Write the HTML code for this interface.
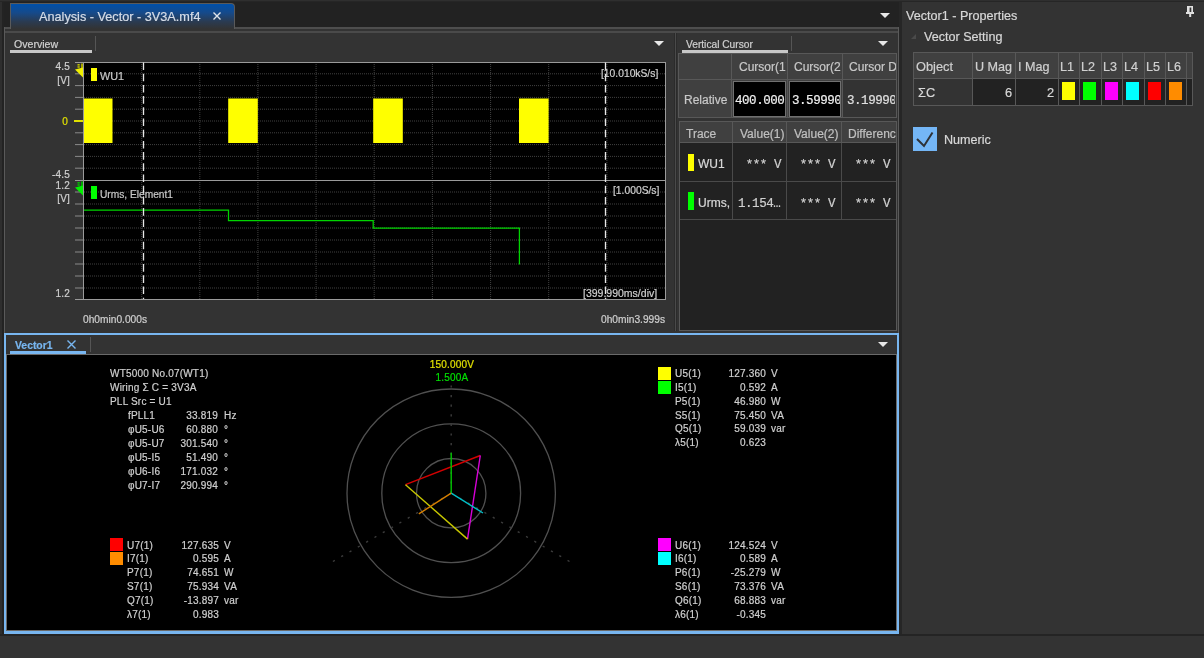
<!DOCTYPE html><html><head><meta charset="utf-8"><style>
html,body{margin:0;padding:0;width:1204px;height:658px;overflow:hidden;background:#333;font-family:"Liberation Sans",sans-serif;position:relative}
.t{position:absolute;height:0;white-space:pre;line-height:0;}
.t span{position:absolute;left:0;bottom:0;line-height:1;display:block;transform:translateY(0.1535em);-webkit-text-stroke:0.2px currentColor;}
.t.m span{transform:translateY(0.2335em);letter-spacing:-0.45px}
.t.r span{left:auto;right:0;}
.t.c span{left:auto;right:auto;transform:translate(-50%,0.1535em);}
.clip{position:absolute;overflow:hidden;}
body>div{will-change:transform}
svg{position:absolute;left:0;top:0;}
</style></head><body>
<div style="position:absolute;left:0px;top:0px;width:1204px;height:658px;background:#333"></div>
<div style="position:absolute;left:0px;top:0px;width:1204px;height:1px;background:#2f2f2f"></div>
<div style="position:absolute;left:0px;top:1px;width:1204px;height:1px;background:#262626"></div>
<div style="position:absolute;left:0px;top:2px;width:900px;height:27px;background:#222"></div>
<div style="position:absolute;left:0px;top:2px;width:2px;height:632px;background:#2e2e2e"></div>
<div style="position:absolute;left:2px;top:2px;width:2px;height:632px;background:#232323"></div>
<div style="position:absolute;left:899px;top:2px;width:3px;height:632px;background:#262626"></div>
<div style="position:absolute;left:902px;top:2px;width:302px;height:632px;background:#333"></div>
<div style="position:absolute;left:0px;top:634px;width:1204px;height:2px;background:#242424"></div>
<div style="position:absolute;left:899px;top:634px;width:2px;height:2px;background:#242424"></div>
<div style="position:absolute;left:4px;top:27px;width:895px;height:2px;background:#4e4e4e"></div>
<div style="position:absolute;left:4px;top:27px;width:1px;height:306px;background:#5a5a5a"></div>
<div style="position:absolute;left:898px;top:27px;width:1px;height:306px;background:#5a5a5a"></div>
<div style="position:absolute;left:5px;top:29px;width:893px;height:2px;background:#333"></div>
<div style="position:absolute;left:5px;top:31px;width:893px;height:2px;background:#4a4a4a"></div>
<div style="position:absolute;left:5px;top:33px;width:893px;height:300px;background:#333"></div>
<div style="position:absolute;left:10px;top:3px;width:223px;height:25px;border:1px solid #5a5a5a;border-bottom:none;border-radius:0 4px 0 0;background:linear-gradient(#0050aa,#164a8a 35%,#2a3b52 70%,#333 100%);"></div>
<div style="position:absolute;left:674px;top:33px;width:3px;height:298px;background:#2b2b2b"></div>
<div style="position:absolute;left:675px;top:33px;width:1px;height:298px;background:#4a4a4a"></div>
<div style="position:absolute;left:10px;top:50px;width:82px;height:3px;background:#c8c8c8"></div>
<div style="position:absolute;left:95px;top:36px;width:1px;height:15px;background:#555"></div>
<div style="position:absolute;left:83px;top:62px;width:582px;height:238px;background:#000"></div>
<div style="position:absolute;left:682px;top:50px;width:106px;height:3px;background:#c8c8c8"></div>
<div style="position:absolute;left:791px;top:36px;width:1px;height:15px;background:#555"></div>
<div style="position:absolute;left:678px;top:53px;width:219px;height:65px;background:#404040;border:1px solid #585858;box-sizing:border-box"></div>
<div style="position:absolute;left:731px;top:53px;width:1px;height:65px;background:#585858"></div>
<div style="position:absolute;left:787px;top:53px;width:1px;height:65px;background:#585858"></div>
<div style="position:absolute;left:842px;top:53px;width:1px;height:65px;background:#585858"></div>
<div style="position:absolute;left:678px;top:79px;width:219px;height:1px;background:#585858"></div>
<div style="position:absolute;left:733px;top:81px;width:53px;height:36px;background:#000;border:1px solid #707070;box-sizing:border-box"></div>
<div style="position:absolute;left:789px;top:81px;width:52px;height:36px;background:#000;border:1px solid #707070;box-sizing:border-box"></div>
<div style="position:absolute;left:843px;top:80px;width:53px;height:37px;background:#333"></div>
<div style="position:absolute;left:679px;top:121px;width:218px;height:210px;background:#222;border:1px solid #585858;box-sizing:border-box"></div>
<div style="position:absolute;left:680px;top:122px;width:216px;height:20px;background:#404040"></div>
<div style="position:absolute;left:680px;top:142px;width:216px;height:1px;background:#585858"></div>
<div style="position:absolute;left:680px;top:181px;width:216px;height:1px;background:#4a4a4a"></div>
<div style="position:absolute;left:680px;top:219px;width:216px;height:1px;background:#4a4a4a"></div>
<div style="position:absolute;left:732px;top:122px;width:1px;height:20px;background:#585858"></div>
<div style="position:absolute;left:732px;top:143px;width:1px;height:76px;background:#4a4a4a"></div>
<div style="position:absolute;left:786px;top:122px;width:1px;height:20px;background:#585858"></div>
<div style="position:absolute;left:786px;top:143px;width:1px;height:76px;background:#4a4a4a"></div>
<div style="position:absolute;left:841px;top:122px;width:1px;height:20px;background:#585858"></div>
<div style="position:absolute;left:841px;top:143px;width:1px;height:76px;background:#4a4a4a"></div>
<div style="position:absolute;left:688px;top:154px;width:6px;height:17px;background:#ffff00"></div>
<div style="position:absolute;left:688px;top:192px;width:6px;height:18px;background:#00ff00"></div>
<div style="position:absolute;left:4px;top:333px;width:895px;height:2px;background:#78b6f0"></div>
<div style="position:absolute;left:4px;top:333px;width:2px;height:300px;background:#78b6f0"></div>
<div style="position:absolute;left:897px;top:333px;width:2px;height:300px;background:#78b6f0"></div>
<div style="position:absolute;left:4px;top:631px;width:895px;height:3px;background:#78b6f0"></div>
<div style="position:absolute;left:6px;top:335px;width:891px;height:20px;background:#333"></div>
<div style="position:absolute;left:6px;top:354px;width:891px;height:1px;background:#6a6a6a"></div>
<div style="position:absolute;left:6px;top:354px;width:1px;height:277px;background:#6a6a6a"></div>
<div style="position:absolute;left:896px;top:354px;width:1px;height:277px;background:#6a6a6a"></div>
<div style="position:absolute;left:6px;top:630px;width:891px;height:1px;background:#6a6a6a"></div>
<div style="position:absolute;left:7px;top:355px;width:889px;height:275px;background:#000"></div>
<div style="position:absolute;left:10px;top:351px;width:76px;height:3px;background:#78b6f0"></div>
<div style="position:absolute;left:90px;top:337px;width:1px;height:15px;background:#555"></div>
<div style="position:absolute;left:110.2px;top:538.0px;width:12.5px;height:12.5px;background:#ff0000"></div>
<div style="position:absolute;left:110.2px;top:552.0px;width:12.5px;height:12.5px;background:#ff8c00"></div>
<div style="position:absolute;left:657.6px;top:366.5px;width:12.5px;height:12.5px;background:#ffff00"></div>
<div style="position:absolute;left:657.6px;top:380.5px;width:12.5px;height:12.5px;background:#00ff00"></div>
<div style="position:absolute;left:657.6px;top:538.0px;width:12.5px;height:12.5px;background:#ff00ff"></div>
<div style="position:absolute;left:657.6px;top:552.0px;width:12.5px;height:12.5px;background:#00ffff"></div>
<div style="position:absolute;left:913px;top:52px;width:280px;height:54px;background:#222;border:1px solid #585858;box-sizing:border-box"></div>
<div style="position:absolute;left:914px;top:53px;width:278px;height:25px;background:#404040"></div>
<div style="position:absolute;left:914px;top:53px;width:58px;height:52px;background:#404040"></div>
<div style="position:absolute;left:914px;top:79px;width:58px;height:26px;background:#333"></div>
<div style="position:absolute;left:914px;top:78px;width:278px;height:1px;background:#585858"></div>
<div style="position:absolute;left:972px;top:53px;width:1px;height:52px;background:#585858"></div>
<div style="position:absolute;left:1015px;top:53px;width:1px;height:52px;background:#585858"></div>
<div style="position:absolute;left:1058px;top:53px;width:1px;height:52px;background:#585858"></div>
<div style="position:absolute;left:1079px;top:53px;width:1px;height:52px;background:#585858"></div>
<div style="position:absolute;left:1101px;top:53px;width:1px;height:52px;background:#585858"></div>
<div style="position:absolute;left:1122px;top:53px;width:1px;height:52px;background:#585858"></div>
<div style="position:absolute;left:1144px;top:53px;width:1px;height:52px;background:#585858"></div>
<div style="position:absolute;left:1165px;top:53px;width:1px;height:52px;background:#585858"></div>
<div style="position:absolute;left:1186px;top:53px;width:1px;height:52px;background:#585858"></div>
<div style="position:absolute;left:1061.5px;top:82px;width:13px;height:18.3px;background:#ffff00"></div>
<div style="position:absolute;left:1082.5px;top:82px;width:13px;height:18.3px;background:#00ff00"></div>
<div style="position:absolute;left:1104.5px;top:82px;width:13px;height:18.3px;background:#ff00ff"></div>
<div style="position:absolute;left:1125.5px;top:82px;width:13px;height:18.3px;background:#00ffff"></div>
<div style="position:absolute;left:1147.5px;top:82px;width:13px;height:18.3px;background:#ff0000"></div>
<div style="position:absolute;left:1168.5px;top:82px;width:13px;height:18.3px;background:#ff8c00"></div>
<div style="position:absolute;left:913px;top:127px;width:24px;height:24px;background:#74b6f6"></div>
<svg width="1204" height="658" style="position:absolute;left:0;top:0;pointer-events:none"><path d="M880 13 L890 13 L885 18 Z" fill="#e8e8e8"/><path d="M213.5 12.5 L220.5 19.5 M220.5 12.5 L213.5 19.5" stroke="#dfe4ea" stroke-width="1.4"/><path d="M654 41 L664 41 L659 46 Z" fill="#e8e8e8"/><path d="M878 41 L888 41 L883 46 Z" fill="#e8e8e8"/><line x1="141.7" y1="62" x2="141.7" y2="300" stroke="#404040" stroke-width="1" stroke-dasharray="1 1"/><line x1="199.8" y1="62" x2="199.8" y2="300" stroke="#404040" stroke-width="1" stroke-dasharray="1 1"/><line x1="257.9" y1="62" x2="257.9" y2="300" stroke="#404040" stroke-width="1" stroke-dasharray="1 1"/><line x1="316.1" y1="62" x2="316.1" y2="300" stroke="#404040" stroke-width="1" stroke-dasharray="1 1"/><line x1="374.2" y1="62" x2="374.2" y2="300" stroke="#404040" stroke-width="1" stroke-dasharray="1 1"/><line x1="432.4" y1="62" x2="432.4" y2="300" stroke="#404040" stroke-width="1" stroke-dasharray="1 1"/><line x1="490.6" y1="62" x2="490.6" y2="300" stroke="#404040" stroke-width="1" stroke-dasharray="1 1"/><line x1="548.7" y1="62" x2="548.7" y2="300" stroke="#404040" stroke-width="1" stroke-dasharray="1 1"/><line x1="606.9" y1="62" x2="606.9" y2="300" stroke="#404040" stroke-width="1" stroke-dasharray="1 1"/><line x1="84" y1="73.8" x2="665" y2="73.8" stroke="#404040" stroke-width="1" stroke-dasharray="1 1"/><line x1="75" y1="73.8" x2="83" y2="73.8" stroke="#8a8a8a" stroke-width="1"/><line x1="84" y1="85.6" x2="665" y2="85.6" stroke="#404040" stroke-width="1" stroke-dasharray="1 1"/><line x1="75" y1="85.6" x2="83" y2="85.6" stroke="#8a8a8a" stroke-width="1"/><line x1="84" y1="97.4" x2="665" y2="97.4" stroke="#404040" stroke-width="1" stroke-dasharray="1 1"/><line x1="75" y1="97.4" x2="83" y2="97.4" stroke="#8a8a8a" stroke-width="1"/><line x1="84" y1="109.2" x2="665" y2="109.2" stroke="#404040" stroke-width="1" stroke-dasharray="1 1"/><line x1="75" y1="109.2" x2="83" y2="109.2" stroke="#8a8a8a" stroke-width="1"/><line x1="84" y1="121.0" x2="665" y2="121.0" stroke="#404040" stroke-width="1" stroke-dasharray="1 1"/><line x1="75" y1="121.0" x2="83" y2="121.0" stroke="#8a8a8a" stroke-width="1"/><line x1="84" y1="132.8" x2="665" y2="132.8" stroke="#404040" stroke-width="1" stroke-dasharray="1 1"/><line x1="75" y1="132.8" x2="83" y2="132.8" stroke="#8a8a8a" stroke-width="1"/><line x1="84" y1="144.6" x2="665" y2="144.6" stroke="#404040" stroke-width="1" stroke-dasharray="1 1"/><line x1="75" y1="144.6" x2="83" y2="144.6" stroke="#8a8a8a" stroke-width="1"/><line x1="84" y1="156.4" x2="665" y2="156.4" stroke="#404040" stroke-width="1" stroke-dasharray="1 1"/><line x1="75" y1="156.4" x2="83" y2="156.4" stroke="#8a8a8a" stroke-width="1"/><line x1="84" y1="168.2" x2="665" y2="168.2" stroke="#404040" stroke-width="1" stroke-dasharray="1 1"/><line x1="75" y1="168.2" x2="83" y2="168.2" stroke="#8a8a8a" stroke-width="1"/><line x1="84" y1="192.0" x2="665" y2="192.0" stroke="#404040" stroke-width="1" stroke-dasharray="1 1"/><line x1="75" y1="192.0" x2="83" y2="192.0" stroke="#8a8a8a" stroke-width="1"/><line x1="84" y1="204.0" x2="665" y2="204.0" stroke="#404040" stroke-width="1" stroke-dasharray="1 1"/><line x1="75" y1="204.0" x2="83" y2="204.0" stroke="#8a8a8a" stroke-width="1"/><line x1="84" y1="216.0" x2="665" y2="216.0" stroke="#404040" stroke-width="1" stroke-dasharray="1 1"/><line x1="75" y1="216.0" x2="83" y2="216.0" stroke="#8a8a8a" stroke-width="1"/><line x1="84" y1="228.0" x2="665" y2="228.0" stroke="#404040" stroke-width="1" stroke-dasharray="1 1"/><line x1="75" y1="228.0" x2="83" y2="228.0" stroke="#8a8a8a" stroke-width="1"/><line x1="84" y1="240.0" x2="665" y2="240.0" stroke="#404040" stroke-width="1" stroke-dasharray="1 1"/><line x1="75" y1="240.0" x2="83" y2="240.0" stroke="#8a8a8a" stroke-width="1"/><line x1="84" y1="252.0" x2="665" y2="252.0" stroke="#404040" stroke-width="1" stroke-dasharray="1 1"/><line x1="75" y1="252.0" x2="83" y2="252.0" stroke="#8a8a8a" stroke-width="1"/><line x1="84" y1="264.0" x2="665" y2="264.0" stroke="#404040" stroke-width="1" stroke-dasharray="1 1"/><line x1="75" y1="264.0" x2="83" y2="264.0" stroke="#8a8a8a" stroke-width="1"/><line x1="84" y1="276.0" x2="665" y2="276.0" stroke="#404040" stroke-width="1" stroke-dasharray="1 1"/><line x1="75" y1="276.0" x2="83" y2="276.0" stroke="#8a8a8a" stroke-width="1"/><line x1="84" y1="288.0" x2="665" y2="288.0" stroke="#404040" stroke-width="1" stroke-dasharray="1 1"/><line x1="75" y1="288.0" x2="83" y2="288.0" stroke="#8a8a8a" stroke-width="1"/><line x1="75" y1="62.5" x2="666" y2="62.5" stroke="#9a9a9a"/><line x1="75" y1="180.5" x2="666" y2="180.5" stroke="#9a9a9a"/><line x1="75" y1="299.5" x2="666" y2="299.5" stroke="#9a9a9a"/><line x1="83.5" y1="62" x2="83.5" y2="300" stroke="#9a9a9a"/><line x1="665.5" y1="62" x2="665.5" y2="300" stroke="#9a9a9a"/><rect x="84" y="98.5" width="28.5" height="44.5" fill="#ffff00"/><rect x="228.2" y="98.5" width="29.6" height="44.5" fill="#ffff00"/><rect x="373.2" y="98.5" width="29.6" height="44.5" fill="#ffff00"/><rect x="519" y="98.5" width="29.6" height="44.5" fill="#ffff00"/><line x1="74" y1="121" x2="83" y2="121" stroke="#e0e000" stroke-width="2"/><path d="M84 210 H228.5 V220.5 H373.2 V228 H519.4 V264.5" fill="none" stroke="#00d400" stroke-width="1.25"/><line x1="143.5" y1="62.5" x2="143.5" y2="299" stroke="#e8e8e8" stroke-width="1.3" stroke-dasharray="7.6 3.6"/><line x1="605.5" y1="62.5" x2="605.5" y2="299" stroke="#e8e8e8" stroke-width="1.3" stroke-dasharray="7.6 3.6"/><rect x="81" y="63.5" width="2" height="7" fill="#a8a800"/><path d="M75 69.5 L83 67.5 L83 77.5 Z" fill="#f0f000"/><rect x="77.5" y="64" width="2.2" height="1.6" fill="#c0c000"/><rect x="77.5" y="66.2" width="2.2" height="1.6" fill="#c0c000"/><rect x="81" y="181.5" width="2" height="7" fill="#00a800"/><path d="M75 187.5 L83 185.5 L83 195.5 Z" fill="#00f000"/><rect x="77.5" y="182" width="2.2" height="1.6" fill="#00c000"/><rect x="77.5" y="184.2" width="2.2" height="1.6" fill="#00c000"/><path d="M67.5 340.5 L75.5 348.5 M75.5 340.5 L67.5 348.5" stroke="#78b6f0" stroke-width="1.4"/><path d="M878 342 L888 342 L883 347 Z" fill="#e8e8e8"/><circle cx="451.2" cy="493.2" r="34.7" fill="none" stroke="#505050" stroke-width="1.3"/><circle cx="451.2" cy="493.2" r="69.4" fill="none" stroke="#505050" stroke-width="1.3"/><circle cx="451.2" cy="493.2" r="104.2" fill="none" stroke="#505050" stroke-width="1.3"/><line x1="451.2" y1="493.2" x2="451.2" y2="385.2" stroke="#3c3c3c" stroke-width="1.4" stroke-dasharray="2.2 7.4"/><line x1="451.2" y1="493.2" x2="331.7" y2="562.2" stroke="#3c3c3c" stroke-width="1.4" stroke-dasharray="2.2 7.4"/><line x1="451.2" y1="493.2" x2="570.7" y2="562.2" stroke="#3c3c3c" stroke-width="1.4" stroke-dasharray="2.2 7.4"/><path d="M405.5 484.7 L480.3 455.5" stroke="#d40000" stroke-width="1.4" fill="none"/><path d="M480.3 455.5 L467.5 539.1" stroke="#d800d8" stroke-width="1.4" fill="none"/><path d="M467.5 539.1 L405.5 484.7" stroke="#c8c800" stroke-width="1.4" fill="none"/><path d="M451.2 493.2 L451.2 452.8" stroke="#00c800" stroke-width="1.4" fill="none"/><path d="M451.2 493.2 L483 513" stroke="#00c0c8" stroke-width="1.4" fill="none"/><path d="M451.2 493.2 L418.8 513.9" stroke="#d88000" stroke-width="1.4" fill="none"/><g fill="#e0e0e0"><rect x="1187" y="6" width="6" height="1.5"/><rect x="1187" y="6" width="2.6" height="7"/><rect x="1191.3" y="6" width="1.7" height="7"/><rect x="1186" y="12" width="8" height="2"/><rect x="1189.2" y="13" width="2" height="4"/></g><path d="M916 34 L916 39 L911 39 Z" fill="#4a4a4a"/><path d="M917 139 L924 146 L932.5 132.5" stroke="#2e3238" stroke-width="2" fill="none"/></svg>
<div class="t" style="left:39px;top:22px;font-size:12.7px;color:#d6dde8;"><span>Analysis - Vector - 3V3A.mf4</span></div>
<div class="t" style="left:14px;top:48px;font-size:10.6px;color:#d0d0d0;"><span>Overview</span></div>
<div style="position:absolute;left:91.3px;top:68px;width:5.6px;height:12.8px;background:#ffff00"></div>
<div class="t" style="left:100px;top:80px;font-size:10.8px;color:#c8c8c8;"><span>WU1</span></div>
<div style="position:absolute;left:91.3px;top:186px;width:5.6px;height:12.6px;background:#00ff00"></div>
<div class="t" style="left:100px;top:198px;font-size:10.2px;color:#c8c8c8;"><span>Urms, Element1</span></div>
<div class="t" style="left:601px;top:77px;font-size:10.3px;color:#d0d0d0;"><span>[10.010kS/s]</span></div>
<div class="t" style="left:613px;top:194px;font-size:10.3px;color:#d0d0d0;"><span>[1.000S/s]</span></div>
<div class="t" style="left:583px;top:295.5px;font-size:10.5px;color:#d0d0d0;"><span>[399.990ms/div]</span></div>
<div class="t r" style="right:1134px;top:70px;font-size:10px;color:#d0d0d0;letter-spacing:0.2px;"><span>4.5</span></div>
<div class="t r" style="right:1134px;top:83.5px;font-size:10px;color:#d0d0d0;letter-spacing:0.2px;"><span>[V]</span></div>
<div class="t r" style="right:1136.5px;top:125px;font-size:10px;color:#e0e000;letter-spacing:0.2px;"><span>0</span></div>
<div class="t r" style="right:1134px;top:178px;font-size:10px;color:#d0d0d0;letter-spacing:0.2px;"><span>-4.5</span></div>
<div class="t r" style="right:1134px;top:189px;font-size:10px;color:#d0d0d0;letter-spacing:0.2px;"><span>1.2</span></div>
<div class="t r" style="right:1134px;top:202px;font-size:10px;color:#d0d0d0;letter-spacing:0.2px;"><span>[V]</span></div>
<div class="t r" style="right:1134px;top:297px;font-size:10px;color:#d0d0d0;letter-spacing:0.2px;"><span>1.2</span></div>
<div class="t" style="left:83px;top:323px;font-size:10.2px;color:#d0d0d0;"><span>0h0min0.000s</span></div>
<div class="t r" style="right:539px;top:323px;font-size:10.2px;color:#d0d0d0;"><span>0h0min3.999s</span></div>
<div class="t" style="left:686px;top:48px;font-size:10.2px;color:#d0d0d0;"><span>Vertical Cursor</span></div>
<div class="clip" style="left:732px;top:54px;width:53.5px;height:25px">
<div class="t" style="left:7px;top:17px;font-size:12px;color:#c8c8c8;"><span>Cursor(1)</span></div>
</div>
<div class="clip" style="left:788px;top:54px;width:53px;height:25px">
<div class="t" style="left:6px;top:17px;font-size:12px;color:#c8c8c8;"><span>Cursor(2)</span></div>
</div>
<div class="clip" style="left:843px;top:54px;width:53px;height:25px">
<div class="t" style="left:6px;top:17px;font-size:12px;color:#c8c8c8;"><span>Cursor D</span></div>
</div>
<div class="t" style="left:684px;top:104px;font-size:12px;color:#c8c8c8;"><span>Relative</span></div>
<div class="clip" style="left:734px;top:82px;width:51px;height:34px">
<div class="t m" style="left:1px;top:22px;font-size:12.5px;color:#f0f0f0;font-family:'Liberation Mono',monospace;"><span>400.000</span></div>
</div>
<div class="clip" style="left:790px;top:82px;width:50px;height:34px">
<div class="t m" style="left:2px;top:22px;font-size:12.5px;color:#f0f0f0;font-family:'Liberation Mono',monospace;"><span>3.59990</span></div>
</div>
<div class="clip" style="left:844px;top:82px;width:51px;height:34px">
<div class="t m" style="left:3px;top:22px;font-size:12.5px;color:#e0e0e0;font-family:'Liberation Mono',monospace;"><span>3.19990</span></div>
</div>
<div class="t" style="left:686px;top:138px;font-size:12px;color:#c0c0c0;"><span>Trace</span></div>
<div class="t" style="left:740px;top:138px;font-size:12px;color:#c0c0c0;"><span>Value(1)</span></div>
<div class="t" style="left:794px;top:138px;font-size:12px;color:#c0c0c0;"><span>Value(2)</span></div>
<div class="clip" style="left:842px;top:122px;width:54px;height:20px">
<div class="t" style="left:6px;top:16px;font-size:12px;color:#c0c0c0;"><span>Difference</span></div>
</div>
<div class="t" style="left:698px;top:167.5px;font-size:12px;color:#d8d8d8;"><span>WU1</span></div>
<div class="clip" style="left:695px;top:182px;width:36px;height:36px">
<div class="t" style="left:3px;top:24.5px;font-size:12px;color:#d8d8d8;"><span>Urms, Element1</span></div>
</div>
<div class="t r m" style="right:423px;top:168px;font-size:12.5px;color:#d0d0d0;font-family:'Liberation Mono',monospace;"><span>*** V</span></div>
<div class="t r m" style="right:369px;top:168px;font-size:12.5px;color:#d0d0d0;font-family:'Liberation Mono',monospace;"><span>*** V</span></div>
<div class="t r m" style="right:314px;top:168px;font-size:12.5px;color:#d0d0d0;font-family:'Liberation Mono',monospace;"><span>*** V</span></div>
<div class="t m" style="left:738px;top:206.5px;font-size:12.5px;color:#d0d0d0;font-family:'Liberation Mono',monospace;"><span>1.154…</span></div>
<div class="t r m" style="right:369px;top:206.5px;font-size:12.5px;color:#d0d0d0;font-family:'Liberation Mono',monospace;"><span>*** V</span></div>
<div class="t r m" style="right:314px;top:206.5px;font-size:12.5px;color:#d0d0d0;font-family:'Liberation Mono',monospace;"><span>*** V</span></div>
<div class="t" style="left:14.5px;top:349px;font-size:10.4px;color:#78b6f0;font-weight:bold"><span>Vector1</span></div>
<div class="t" style="left:110px;top:377px;font-size:10px;color:#d0d0d0;letter-spacing:0.2px;"><span>WT5000 No.07(WT1)</span></div>
<div class="t" style="left:110px;top:391px;font-size:10px;color:#d0d0d0;letter-spacing:0.2px;"><span>Wiring Σ C = 3V3A</span></div>
<div class="t" style="left:110px;top:405px;font-size:10px;color:#d0d0d0;letter-spacing:0.2px;"><span>PLL Src = U1</span></div>
<div class="t" style="left:127.5px;top:419px;font-size:10px;color:#d0d0d0;letter-spacing:0.2px;"><span>fPLL1</span></div>
<div class="t r" style="right:986px;top:419px;font-size:10px;color:#d0d0d0;letter-spacing:0.2px;"><span>33.819</span></div>
<div class="t" style="left:223.5px;top:419px;font-size:10px;color:#d0d0d0;letter-spacing:0.2px;"><span>Hz</span></div>
<div class="t" style="left:127.5px;top:433px;font-size:10px;color:#d0d0d0;letter-spacing:0.2px;"><span>φU5-U6</span></div>
<div class="t r" style="right:986px;top:433px;font-size:10px;color:#d0d0d0;letter-spacing:0.2px;"><span>60.880</span></div>
<div class="t" style="left:223.5px;top:433px;font-size:10px;color:#d0d0d0;letter-spacing:0.2px;"><span>°</span></div>
<div class="t" style="left:127.5px;top:447px;font-size:10px;color:#d0d0d0;letter-spacing:0.2px;"><span>φU5-U7</span></div>
<div class="t r" style="right:986px;top:447px;font-size:10px;color:#d0d0d0;letter-spacing:0.2px;"><span>301.540</span></div>
<div class="t" style="left:223.5px;top:447px;font-size:10px;color:#d0d0d0;letter-spacing:0.2px;"><span>°</span></div>
<div class="t" style="left:127.5px;top:461px;font-size:10px;color:#d0d0d0;letter-spacing:0.2px;"><span>φU5-I5</span></div>
<div class="t r" style="right:986px;top:461px;font-size:10px;color:#d0d0d0;letter-spacing:0.2px;"><span>51.490</span></div>
<div class="t" style="left:223.5px;top:461px;font-size:10px;color:#d0d0d0;letter-spacing:0.2px;"><span>°</span></div>
<div class="t" style="left:127.5px;top:475px;font-size:10px;color:#d0d0d0;letter-spacing:0.2px;"><span>φU6-I6</span></div>
<div class="t r" style="right:986px;top:475px;font-size:10px;color:#d0d0d0;letter-spacing:0.2px;"><span>171.032</span></div>
<div class="t" style="left:223.5px;top:475px;font-size:10px;color:#d0d0d0;letter-spacing:0.2px;"><span>°</span></div>
<div class="t" style="left:127.5px;top:489px;font-size:10px;color:#d0d0d0;letter-spacing:0.2px;"><span>φU7-I7</span></div>
<div class="t r" style="right:986px;top:489px;font-size:10px;color:#d0d0d0;letter-spacing:0.2px;"><span>290.994</span></div>
<div class="t" style="left:223.5px;top:489px;font-size:10px;color:#d0d0d0;letter-spacing:0.2px;"><span>°</span></div>
<div class="t" style="left:127.2px;top:548.5px;font-size:10px;color:#d0d0d0;letter-spacing:0.2px;"><span>U7(1)</span></div>
<div class="t r" style="right:985.5px;top:548.5px;font-size:10px;color:#d0d0d0;letter-spacing:0.2px;"><span>127.635</span></div>
<div class="t" style="left:223.5px;top:548.5px;font-size:10px;color:#d0d0d0;letter-spacing:0.2px;"><span>V</span></div>
<div class="t" style="left:127.2px;top:562.35px;font-size:10px;color:#d0d0d0;letter-spacing:0.2px;"><span>I7(1)</span></div>
<div class="t r" style="right:985.5px;top:562.35px;font-size:10px;color:#d0d0d0;letter-spacing:0.2px;"><span>0.595</span></div>
<div class="t" style="left:223.5px;top:562.35px;font-size:10px;color:#d0d0d0;letter-spacing:0.2px;"><span>A</span></div>
<div class="t" style="left:127.2px;top:576.2px;font-size:10px;color:#d0d0d0;letter-spacing:0.2px;"><span>P7(1)</span></div>
<div class="t r" style="right:985.5px;top:576.2px;font-size:10px;color:#d0d0d0;letter-spacing:0.2px;"><span>74.651</span></div>
<div class="t" style="left:223.5px;top:576.2px;font-size:10px;color:#d0d0d0;letter-spacing:0.2px;"><span>W</span></div>
<div class="t" style="left:127.2px;top:590.05px;font-size:10px;color:#d0d0d0;letter-spacing:0.2px;"><span>S7(1)</span></div>
<div class="t r" style="right:985.5px;top:590.05px;font-size:10px;color:#d0d0d0;letter-spacing:0.2px;"><span>75.934</span></div>
<div class="t" style="left:223.5px;top:590.05px;font-size:10px;color:#d0d0d0;letter-spacing:0.2px;"><span>VA</span></div>
<div class="t" style="left:127.2px;top:603.9px;font-size:10px;color:#d0d0d0;letter-spacing:0.2px;"><span>Q7(1)</span></div>
<div class="t r" style="right:985.5px;top:603.9px;font-size:10px;color:#d0d0d0;letter-spacing:0.2px;"><span>-13.897</span></div>
<div class="t" style="left:223.5px;top:603.9px;font-size:10px;color:#d0d0d0;letter-spacing:0.2px;"><span>var</span></div>
<div class="t" style="left:127.2px;top:617.75px;font-size:10px;color:#d0d0d0;letter-spacing:0.2px;"><span>λ7(1)</span></div>
<div class="t r" style="right:985.5px;top:617.75px;font-size:10px;color:#d0d0d0;letter-spacing:0.2px;"><span>0.983</span></div>
<div class="t" style="left:223.5px;top:617.75px;font-size:10px;color:#d0d0d0;letter-spacing:0.2px;"><span></span></div>
<div class="t" style="left:674.6px;top:377.0px;font-size:10px;color:#d0d0d0;letter-spacing:0.2px;"><span>U5(1)</span></div>
<div class="t r" style="right:438.1px;top:377.0px;font-size:10px;color:#d0d0d0;letter-spacing:0.2px;"><span>127.360</span></div>
<div class="t" style="left:770.9px;top:377.0px;font-size:10px;color:#d0d0d0;letter-spacing:0.2px;"><span>V</span></div>
<div class="t" style="left:674.6px;top:390.85px;font-size:10px;color:#d0d0d0;letter-spacing:0.2px;"><span>I5(1)</span></div>
<div class="t r" style="right:438.1px;top:390.85px;font-size:10px;color:#d0d0d0;letter-spacing:0.2px;"><span>0.592</span></div>
<div class="t" style="left:770.9px;top:390.85px;font-size:10px;color:#d0d0d0;letter-spacing:0.2px;"><span>A</span></div>
<div class="t" style="left:674.6px;top:404.7px;font-size:10px;color:#d0d0d0;letter-spacing:0.2px;"><span>P5(1)</span></div>
<div class="t r" style="right:438.1px;top:404.7px;font-size:10px;color:#d0d0d0;letter-spacing:0.2px;"><span>46.980</span></div>
<div class="t" style="left:770.9px;top:404.7px;font-size:10px;color:#d0d0d0;letter-spacing:0.2px;"><span>W</span></div>
<div class="t" style="left:674.6px;top:418.55px;font-size:10px;color:#d0d0d0;letter-spacing:0.2px;"><span>S5(1)</span></div>
<div class="t r" style="right:438.1px;top:418.55px;font-size:10px;color:#d0d0d0;letter-spacing:0.2px;"><span>75.450</span></div>
<div class="t" style="left:770.9px;top:418.55px;font-size:10px;color:#d0d0d0;letter-spacing:0.2px;"><span>VA</span></div>
<div class="t" style="left:674.6px;top:432.4px;font-size:10px;color:#d0d0d0;letter-spacing:0.2px;"><span>Q5(1)</span></div>
<div class="t r" style="right:438.1px;top:432.4px;font-size:10px;color:#d0d0d0;letter-spacing:0.2px;"><span>59.039</span></div>
<div class="t" style="left:770.9px;top:432.4px;font-size:10px;color:#d0d0d0;letter-spacing:0.2px;"><span>var</span></div>
<div class="t" style="left:674.6px;top:446.25px;font-size:10px;color:#d0d0d0;letter-spacing:0.2px;"><span>λ5(1)</span></div>
<div class="t r" style="right:438.1px;top:446.25px;font-size:10px;color:#d0d0d0;letter-spacing:0.2px;"><span>0.623</span></div>
<div class="t" style="left:770.9px;top:446.25px;font-size:10px;color:#d0d0d0;letter-spacing:0.2px;"><span></span></div>
<div class="t" style="left:674.6px;top:548.5px;font-size:10px;color:#d0d0d0;letter-spacing:0.2px;"><span>U6(1)</span></div>
<div class="t r" style="right:438.1px;top:548.5px;font-size:10px;color:#d0d0d0;letter-spacing:0.2px;"><span>124.524</span></div>
<div class="t" style="left:770.9px;top:548.5px;font-size:10px;color:#d0d0d0;letter-spacing:0.2px;"><span>V</span></div>
<div class="t" style="left:674.6px;top:562.35px;font-size:10px;color:#d0d0d0;letter-spacing:0.2px;"><span>I6(1)</span></div>
<div class="t r" style="right:438.1px;top:562.35px;font-size:10px;color:#d0d0d0;letter-spacing:0.2px;"><span>0.589</span></div>
<div class="t" style="left:770.9px;top:562.35px;font-size:10px;color:#d0d0d0;letter-spacing:0.2px;"><span>A</span></div>
<div class="t" style="left:674.6px;top:576.2px;font-size:10px;color:#d0d0d0;letter-spacing:0.2px;"><span>P6(1)</span></div>
<div class="t r" style="right:438.1px;top:576.2px;font-size:10px;color:#d0d0d0;letter-spacing:0.2px;"><span>-25.279</span></div>
<div class="t" style="left:770.9px;top:576.2px;font-size:10px;color:#d0d0d0;letter-spacing:0.2px;"><span>W</span></div>
<div class="t" style="left:674.6px;top:590.05px;font-size:10px;color:#d0d0d0;letter-spacing:0.2px;"><span>S6(1)</span></div>
<div class="t r" style="right:438.1px;top:590.05px;font-size:10px;color:#d0d0d0;letter-spacing:0.2px;"><span>73.376</span></div>
<div class="t" style="left:770.9px;top:590.05px;font-size:10px;color:#d0d0d0;letter-spacing:0.2px;"><span>VA</span></div>
<div class="t" style="left:674.6px;top:603.9px;font-size:10px;color:#d0d0d0;letter-spacing:0.2px;"><span>Q6(1)</span></div>
<div class="t r" style="right:438.1px;top:603.9px;font-size:10px;color:#d0d0d0;letter-spacing:0.2px;"><span>68.883</span></div>
<div class="t" style="left:770.9px;top:603.9px;font-size:10px;color:#d0d0d0;letter-spacing:0.2px;"><span>var</span></div>
<div class="t" style="left:674.6px;top:617.75px;font-size:10px;color:#d0d0d0;letter-spacing:0.2px;"><span>λ6(1)</span></div>
<div class="t r" style="right:438.1px;top:617.75px;font-size:10px;color:#d0d0d0;letter-spacing:0.2px;"><span>-0.345</span></div>
<div class="t" style="left:770.9px;top:617.75px;font-size:10px;color:#d0d0d0;letter-spacing:0.2px;"><span></span></div>
<div class="t c" style="left:451.8px;top:368px;font-size:10px;color:#e0e000;letter-spacing:0.2px;"><span>150.000V</span></div>
<div class="t c" style="left:452px;top:381px;font-size:10px;color:#00e000;letter-spacing:0.2px;"><span>1.500A</span></div>
<div class="t" style="left:906px;top:21px;font-size:12.6px;color:#d8d8d8;"><span>Vector1 - Properties</span></div>
<div class="t" style="left:924px;top:42px;font-size:12.6px;color:#d8d8d8;"><span>Vector Setting</span></div>
<div class="t" style="left:915.5px;top:72px;font-size:12.8px;color:#d0d0d0;"><span>Object</span></div>
<div class="t" style="left:974.5px;top:72px;font-size:12.6px;color:#d0d0d0;"><span>U Mag</span></div>
<div class="t" style="left:1017.5px;top:72px;font-size:12.6px;color:#d0d0d0;"><span>I Mag</span></div>
<div class="t" style="left:1060.3px;top:72px;font-size:12.6px;color:#d0d0d0;"><span>L1</span></div>
<div class="t" style="left:1081.3px;top:72px;font-size:12.6px;color:#d0d0d0;"><span>L2</span></div>
<div class="t" style="left:1103.3px;top:72px;font-size:12.6px;color:#d0d0d0;"><span>L3</span></div>
<div class="t" style="left:1124.3px;top:72px;font-size:12.6px;color:#d0d0d0;"><span>L4</span></div>
<div class="t" style="left:1146.3px;top:72px;font-size:12.6px;color:#d0d0d0;"><span>L5</span></div>
<div class="t" style="left:1167.3px;top:72px;font-size:12.6px;color:#d0d0d0;"><span>L6</span></div>
<div class="t" style="left:918px;top:98px;font-size:12.8px;color:#d8d8d8;"><span>ΣC</span></div>
<div class="t r" style="right:192.5px;top:98px;font-size:12.8px;color:#d8d8d8;"><span>6</span></div>
<div class="t r" style="right:150px;top:98px;font-size:12.8px;color:#d8d8d8;"><span>2</span></div>
<div class="t" style="left:943.5px;top:144.5px;font-size:12.6px;color:#d8d8d8;"><span>Numeric</span></div>
</body></html>
